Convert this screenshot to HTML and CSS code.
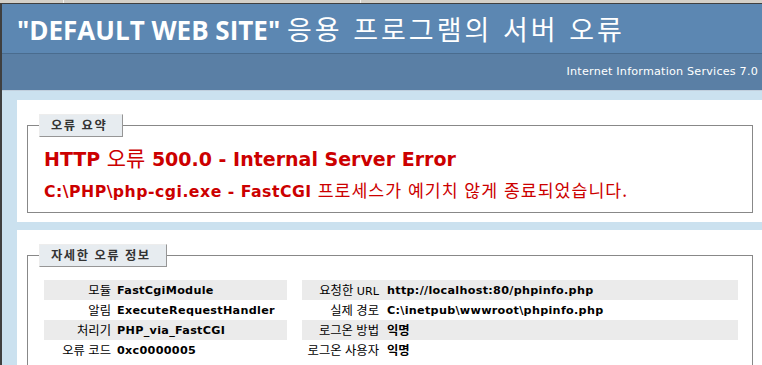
FILE: index.html
```html
<!DOCTYPE html>
<html lang="ko">
<head>
  <meta charset="UTF-8">
  <title>IIS 7.0 상세 오류 - 500.0 - Internal Server Error</title>
  <link rel="stylesheet" href="styles.css">
</head>
<body>
  <div class="chrome">
    <span class="chrome-tab first"></span>
    <span class="chrome-tab second"></span>
  </div>
  <div class="window">
    <div class="header">
      <h1>"DEFAULT WEB SITE" <span class="ko">응용 프로그램의 서버 오류</span></h1>
    </div>
    <div class="server-version">Internet Information Services 7.0</div>

    <div class="content">
      <div class="panel summary">
        <fieldset>
          <legend><span class="ko">오류 요약</span></legend>
          <h2>HTTP <span class="ko">오류</span> 500.0 - Internal Server Error</h2>
          <h3>C:\PHP\php-cgi.exe - FastCGI <span class="ko">프로세스가 예기치 않게 종료되었습니다.</span></h3>
        </fieldset>
      </div>

      <div class="panel details">
        <fieldset>
          <legend><span class="ko">자세한 오류 정보</span></legend>
          <div class="details-cols">
            <table class="details-left">
              <tr class="alt"><th><span class="ko">모듈</span></th><td>FastCgiModule</td></tr>
              <tr><th><span class="ko">알림</span></th><td>ExecuteRequestHandler</td></tr>
              <tr class="alt"><th><span class="ko">처리기</span></th><td>PHP_via_FastCGI</td></tr>
              <tr><th><span class="ko">오류 코드</span></th><td>0xc0000005</td></tr>
            </table>
            <table class="details-right">
              <tr class="alt"><th><span class="ko">요청한</span> URL</th><td>http://localhost:80/phpinfo.php</td></tr>
              <tr><th><span class="ko">실제 경로</span></th><td>C:\inetpub\wwwroot\phpinfo.php</td></tr>
              <tr class="alt"><th><span class="ko">로그온 방법</span></th><td><span class="ko">익명</span></td></tr>
              <tr><th><span class="ko">로그온 사용자</span></th><td><span class="ko">익명</span></td></tr>
            </table>
          </div>
        </fieldset>
      </div>
    </div>
  </div>
</body>
</html>
```

FILE: styles.css
```css
html, body {
  margin: 0;
  overflow: hidden;
}
body {
  background: #cbe1ef;
  font-family: "DejaVu Sans", "Noto Sans CJK KR", sans-serif;
  font-size: 11.2px;
  color: #000;
}
.chrome {
  display: flex;
  height: 3px;
  background: #d4d0c8;
  border-bottom: 1px solid #404040;
}
.chrome-tab {
  border-right: 1px solid #f4f2ee;
}
.chrome-tab.first {
  width: 63px;
}
.chrome-tab.second {
  width: 296px;
}
.window {
  border-left: 2px solid #3f3f3f;
  min-height: 400px;
}
/* Korean runs: the original bitmap face sets wider than the latin one */
.ko {
  font-family: "Noto Sans CJK KR", sans-serif;
  font-size: 1.1em;
  letter-spacing: 0;
}
.header {
  height: 49px;
  padding-left: 15px;
  background: #5c87b2;
  color: #fff;
}
h1 {
  margin: 0;
  font-family: "Open Sans", sans-serif;
  font-size: 26px;
  font-weight: 700;
  line-height: 49px;
  white-space: nowrap;
}
h1 .ko {
  font-size: 27px;
  font-weight: 400;
  letter-spacing: 3px;
}
.server-version {
  height: 36px;
  line-height: 36px;
  padding-right: 4px;
  text-align: right;
  letter-spacing: 0.2px;
  color: #fff;
  background: #5a7fa5;
  border-top: 1px solid #4a6c8e;
  border-bottom: 1px solid #c1cfdd;
}
.content {
  padding: 9px 0 0 15px;
}
.panel {
  width: 726px;
  padding: 14px 10px 10px;
  background: #fff;
}
.panel.summary {
  height: 98px;
}
.panel.details {
  margin-top: 8px;
}
fieldset {
  margin: 0;
  padding: 0 13px 10px 16px;
  border: 1px solid #888;
}
legend {
  margin: 0 0 8px -5px;
  padding: 0 15px 0 11px;
  height: 21px;
  line-height: 21px;
  color: #333;
  font-weight: bold;
  background: #e7ecf0;
  border-top: 1px solid #ededed;
  border-left: 1px solid #ededed;
  border-right: 1px solid #969696;
  border-bottom: 1px solid #969696;
}
legend .ko {
  letter-spacing: 1.5px;
}
h2 {
  margin: -3px 0 0 0;
  font-size: 19px;
  color: #c00;
}
h3 {
  margin: 5px 0 0 0;
  font-size: 15.7px;
  letter-spacing: 0.5px;
  color: #c00;
}
h2 .ko, h3 .ko {
  font-weight: 400;
  letter-spacing: 0;
}
h3 .ko {
  letter-spacing: 1px;
}
.details-cols {
  display: flex;
  gap: 15px;
  margin-top: 5px;
}
table {
  border-collapse: collapse;
  border: none;
}
.details-left {
  width: 243px;
}
.details-right {
  width: 436px;
}
th, td {
  height: 20px;
  padding: 0;
  vertical-align: middle;
  text-align: left;
  font-weight: bold;
  white-space: nowrap;
}
td {
  letter-spacing: 0.3px;
}
th {
  width: 67px;
  padding-right: 6px;
  text-align: right;
  font-weight: normal;
}
.details-right th {
  width: 77px;
  padding-right: 8px;
}
tr.alt th, tr.alt td {
  background: #ebebeb;
}
```
